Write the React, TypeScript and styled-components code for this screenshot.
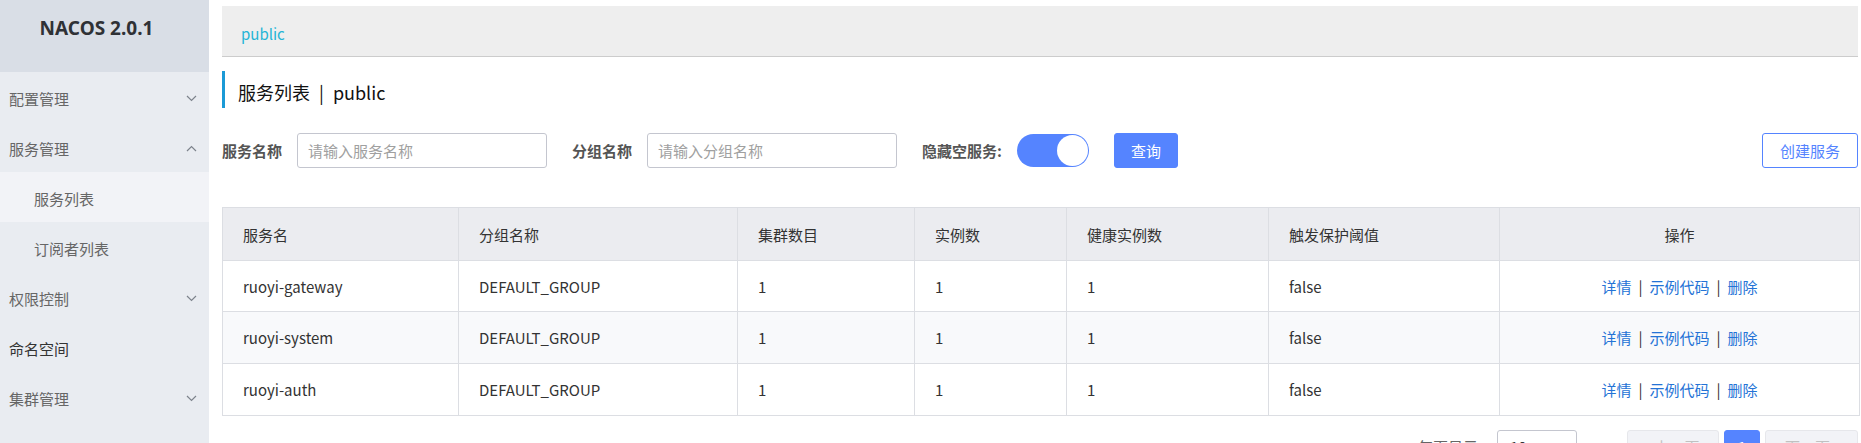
import React from "react";
import styled, { createGlobalStyle } from "styled-components";

const GlobalStyle = createGlobalStyle`
  html, body { margin: 0; padding: 0; overflow: hidden; background: #fff; }
  body { font-family: "Noto Sans CJK SC", "Noto Sans", sans-serif; color: #333; }
  * { box-sizing: border-box; }
`;

const Layout = styled.div`
  display: grid;
  grid-template-columns: 209px 1fr;
  min-height: 100vh;
`;

const Sidebar = styled.aside`
  background: #e9ecf1;
  display: flex;
  flex-direction: column;
`;

const Logo = styled.div`
  height: 72px;
  background: #d9dee6;
  display: flex;
  justify-content: center;
  padding: 14px 16px 0 0;
  font-family: "Noto Sans", sans-serif;
  font-weight: 700;
  font-size: 19px;
  line-height: 28px;
  color: #2f3135;
`;

const MenuItem = styled.div<{ $sub?: boolean; $active?: boolean; $strong?: boolean }>`
  height: 50px;
  display: flex;
  align-items: center;
  justify-content: space-between;
  padding: 3px 12px 0 ${(p) => (p.$sub ? "34px" : "9px")};
  background: ${(p) => (p.$active ? "#f2f3f7" : "transparent")};
  color: ${(p) => (p.$strong ? "#333" : "#666")};
  font-size: 15px;
  line-height: 20px;
`;

const Chevron = ({ up }: { up?: boolean }) => (
  <svg width="11" height="7" viewBox="0 0 11 7" fill="none">
    <path
      d={up ? "M1 6 L5.5 1.5 L10 6" : "M1 1 L5.5 5.5 L10 1"}
      stroke="#7d838c"
      strokeWidth="1.2"
    />
  </svg>
);

const Main = styled.main`
  padding: 6px 3px 0 13px;
  display: flex;
  flex-direction: column;
  min-width: 0;
`;

const Breadcrumb = styled.div`
  height: 51px;
  background: #eeeeee;
  border-bottom: 1px solid #cccccc;
  display: flex;
  align-items: center;
  padding-left: 19px;
  padding-top: 4px;
  color: #25b5d6;
  font-size: 15px;
`;

const PageTitle = styled.h1`
  margin: 14px 0 0;
  height: 37px;
  border-left: 3px solid #1b9ad6;
  padding: 5px 0 0 13px;
  display: flex;
  align-items: center;
  font-size: 18px;
  font-weight: 400;
  color: #111;
  gap: 9px;
`;

const SearchRow = styled.div`
  margin-top: 25px;
  height: 35px;
  display: flex;
  align-items: center;
`;

const FormItem = styled.div`
  display: flex;
  align-items: center;
  margin-right: 25px;
`;

const Label = styled.label`
  font-size: 15px;
  font-weight: 700;
  color: #555;
  margin-right: 15px;
  white-space: nowrap;
`;

const Input = styled.input`
  width: 250px;
  height: 35px;
  border: 1px solid #c4c6cf;
  border-radius: 3px;
  padding: 0 10px;
  font-family: inherit;
  font-size: 15px;
  color: #333;
  outline: none;
  &::placeholder { color: #a0a0a0; }
`;

const Switch = styled.div<{ $on: boolean }>`
  width: 72px;
  height: 33px;
  border-radius: 17px;
  background: ${(p) => (p.$on ? "#5584ff" : "#e6e7eb")};
  display: flex;
  align-items: center;
  justify-content: ${(p) => (p.$on ? "flex-end" : "flex-start")};
  padding: 1px;
`;

const Knob = styled.span`
  width: 31px;
  height: 31px;
  border-radius: 50%;
  background: #fff;
`;

const Button = styled.button<{ $outline?: boolean }>`
  height: 35px;
  padding: 0 ${(p) => (p.$outline ? "17px" : "16px")};
  border-radius: 3px;
  border: 1px solid #5584ff;
  background: ${(p) => (p.$outline ? "#fff" : "#5584ff")};
  color: ${(p) => (p.$outline ? "#5584ff" : "#fff")};
  font-family: inherit;
  font-size: 15px;
  cursor: pointer;
`;

const Spacer = styled.div`
  flex: 1;
`;

const Table = styled.table`
  margin-top: 39px;
  width: 100%;
  border-collapse: collapse;
  table-layout: fixed;
  font-size: 15px;
  border: 1px solid #dcdee3;
`;

const Th = styled.th<{ $center?: boolean }>`
  height: 53px;
  background: #ebecf0;
  border: 1px solid #dcdee3;
  font-weight: 400;
  color: #333;
  text-align: ${(p) => (p.$center ? "center" : "left")};
  padding: 0 20px;
`;

const Tr = styled.tr<{ $alt?: boolean }>`
  background: ${(p) => (p.$alt ? "#f8f9fb" : "#fff")};
  & > td { height: 52px; }
  &:first-child > td { height: 51px; }
`;

const Td = styled.td<{ $center?: boolean }>`
  border: 1px solid #dcdee3;
  padding: 0 20px;
  color: #333;
  text-align: ${(p) => (p.$center ? "center" : "left")};
`;

const Link = styled.a`
  color: #2473d6;
  text-decoration: none;
`;

const Sep = styled.span`
  color: #333;
  margin: 0 7px;
`;

const Pagination = styled.div`
  margin-top: 14px;
  display: flex;
  align-items: center;
  justify-content: flex-end;
  height: 32px;
  font-size: 15px;
  color: #666;
`;

const PageSizeLabel = styled.span`
  margin-right: 19px;
`;

const Select = styled.div`
  width: 80px;
  height: 32px;
  border: 1px solid #c4c6cf;
  border-radius: 3px;
  padding: 0 12px;
  display: flex;
  align-items: center;
  justify-content: space-between;
  color: #333;
  margin-right: 45px;
`;

const PageBtn = styled.div<{ $current?: boolean; $w: number }>`
  width: ${(p) => p.$w}px;
  height: 32px;
  border-radius: 3px;
  margin-left: 5px;
  display: flex;
  align-items: center;
  justify-content: center;
  background: ${(p) => (p.$current ? "#5584ff" : "#f2f3f7")};
  border: 1px solid ${(p) => (p.$current ? "#5584ff" : "#e6e7eb")};
  color: ${(p) => (p.$current ? "#fff" : "#c1c1c1")};
`;

const columns = [
  { title: "服务名", w: 236 },
  { title: "分组名称", w: 279 },
  { title: "集群数目", w: 177 },
  { title: "实例数", w: 152 },
  { title: "健康实例数", w: 202 },
  { title: "触发保护阈值", w: 231 },
  { title: "操作", w: 360, center: true },
];

const rows = [
  { name: "ruoyi-gateway" },
  { name: "ruoyi-system" },
  { name: "ruoyi-auth" },
];

export default function App() {
  return (
    <>
      <GlobalStyle />
      <Layout>
        <Sidebar>
          <Logo>NACOS 2.0.1</Logo>
          <MenuItem>
            配置管理 <Chevron />
          </MenuItem>
          <MenuItem>
            服务管理 <Chevron up />
          </MenuItem>
          <MenuItem $sub $active>
            服务列表
          </MenuItem>
          <MenuItem $sub>订阅者列表</MenuItem>
          <MenuItem>
            权限控制 <Chevron />
          </MenuItem>
          <MenuItem $strong>命名空间</MenuItem>
          <MenuItem>
            集群管理 <Chevron />
          </MenuItem>
        </Sidebar>
        <Main>
          <Breadcrumb>public</Breadcrumb>
          <PageTitle>
            <span>服务列表</span>
            <span>|</span>
            <span>public</span>
          </PageTitle>
          <SearchRow>
            <FormItem>
              <Label>服务名称</Label>
              <Input placeholder="请输入服务名称" />
            </FormItem>
            <FormItem>
              <Label>分组名称</Label>
              <Input placeholder="请输入分组名称" />
            </FormItem>
            <FormItem>
              <Label>隐藏空服务:</Label>
              <Switch $on>
                <Knob />
              </Switch>
            </FormItem>
            <Button>查询</Button>
            <Spacer />
            <Button $outline>创建服务</Button>
          </SearchRow>
          <Table>
            <colgroup>
              {columns.map((c) => (
                <col key={c.title} style={{ width: c.w }} />
              ))}
            </colgroup>
            <thead>
              <tr>
                {columns.map((c) => (
                  <Th key={c.title} $center={c.center}>
                    {c.title}
                  </Th>
                ))}
              </tr>
            </thead>
            <tbody>
              {rows.map((r, i) => (
                <Tr key={r.name} $alt={i % 2 === 1}>
                  <Td>{r.name}</Td>
                  <Td>DEFAULT_GROUP</Td>
                  <Td>1</Td>
                  <Td>1</Td>
                  <Td>1</Td>
                  <Td>false</Td>
                  <Td $center>
                    <Link>详情</Link>
                    <Sep>|</Sep>
                    <Link>示例代码</Link>
                    <Sep>|</Sep>
                    <Link>删除</Link>
                  </Td>
                </Tr>
              ))}
            </tbody>
          </Table>
          <Pagination>
            <PageSizeLabel>每页显示</PageSizeLabel>
            <Select>
              <span>10</span>
              <Chevron />
            </Select>
            <PageBtn $w={92}>‹ 上一页</PageBtn>
            <PageBtn $w={36} $current>
              1
            </PageBtn>
            <PageBtn $w={93}>下一页 ›</PageBtn>
          </Pagination>
        </Main>
      </Layout>
    </>
  );
}
